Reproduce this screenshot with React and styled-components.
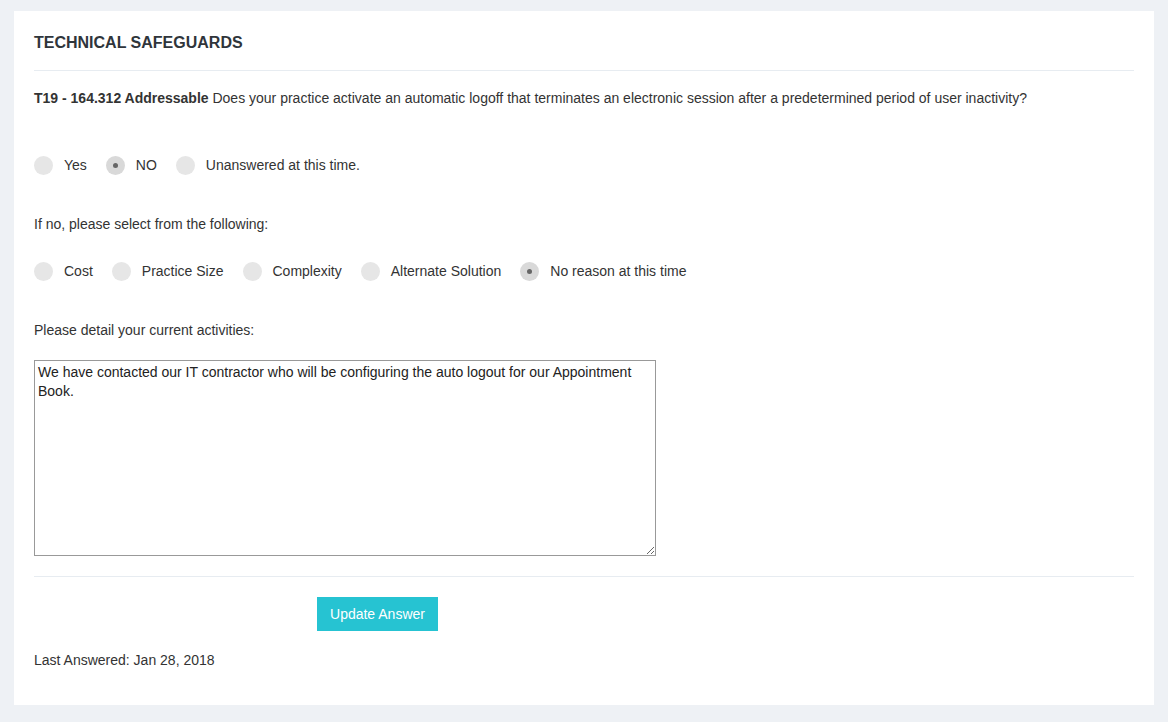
import React from "react";
import styled, { createGlobalStyle } from "styled-components";

const Global = createGlobalStyle`
  html, body { margin: 0; padding: 0; background: #eef1f5; }
  body { font-family: "Liberation Sans", Arial, sans-serif; color: #333; }
  * { box-sizing: border-box; }
`;

const Page = styled.div`
  padding: 11px 14px 17px 14px;
  min-height: 722px;
`;

const Card = styled.section`
  background: #fff;
  padding: 22px 20px 28px 20px;
  height: 694px;
`;

const Title = styled.h2`
  margin: 0;
  font-size: 16px;
  font-weight: 700;
  line-height: 20px;
  color: #2f353b;
  padding-bottom: 17px;
  border-bottom: 1px solid #e7ecf1;
`;

const Question = styled.p`
  margin: 0;
  padding-top: 18px;
  font-size: 14px;
  line-height: 18px;
  color: #333;
  b { font-weight: 700; }
`;

const RadioRow = styled.div`
  display: flex;
  align-items: center;
  gap: 0;
  margin-top: ${(p) => p.$top}px;
  height: 20px;
`;

const Option = styled.label`
  display: flex;
  align-items: center;
  margin-right: 19px;
  font-size: 14px;
  color: #333;
`;

const Circle = styled.span`
  width: 19px;
  height: 19px;
  border-radius: 50%;
  background: ${(p) => (p.$on ? "#d9d9d9" : "#e6e6e6")};
  display: inline-flex;
  align-items: center;
  justify-content: center;
  margin-right: 11px;
  &::after {
    content: "";
    width: 5px;
    height: 5px;
    border-radius: 50%;
    background: ${(p) => (p.$on ? "#666" : "transparent")};
  }
`;

const Label = styled.p`
  margin: ${(p) => p.$top}px 0 0 0;
  font-size: 14px;
  line-height: 18px;
  color: #333;
`;

const Area = styled.textarea`
  display: block;
  margin-top: 21px;
  width: 622px;
  height: 196px;
  border: 1px solid #999;
  padding: 2px 3px;
  font-family: "Liberation Sans", Arial, sans-serif;
  font-size: 14px;
  line-height: 19px;
  color: #222;
  resize: both;
  border-radius: 0;
  outline: none;
`;

const Divider = styled.hr`
  border: 0;
  border-top: 1px solid #e7ecf1;
  margin: 20px 0 0 0;
`;

const ButtonRow = styled.div`
  display: flex;
  padding-left: 283px;
  margin-top: 20px;
`;

const Button = styled.button`
  background: #26c3d2;
  color: #fff;
  border: 0;
  height: 34px;
  width: 121px;
  font-family: "Liberation Sans", Arial, sans-serif;
  font-size: 14px;
  padding: 0;
`;

const Footer = styled.p`
  margin: 20px 0 0 0;
  font-size: 14px;
  line-height: 18px;
  color: #333;
`;

const Radio = ({ on, children }) => (
  <Option>
    <Circle $on={on} />
    {children}
  </Option>
);

export default function App() {
  return (
    <>
      <Global />
      <Page>
        <Card>
          <Title>TECHNICAL SAFEGUARDS</Title>
          <Question>
            <b>T19 - 164.312 Addressable</b> Does your practice activate an automatic logoff that terminates an
            electronic session after a predetermined period of user inactivity?
          </Question>
          <RadioRow $top={48}>
            <Radio>Yes</Radio>
            <Radio on>NO</Radio>
            <Radio>Unanswered at this time.</Radio>
          </RadioRow>
          <Label $top={40}>If no, please select from the following:</Label>
          <RadioRow $top={28}>
            <Radio>Cost</Radio>
            <Radio>Practice Size</Radio>
            <Radio>Complexity</Radio>
            <Radio>Alternate Solution</Radio>
            <Radio on>No reason at this time</Radio>
          </RadioRow>
          <Label $top={40}>Please detail your current activities:</Label>
          <Area
            readOnly
            defaultValue="We have contacted our IT contractor who will be configuring the auto logout for our Appointment Book."
          />
          <Divider />
          <ButtonRow>
            <Button>Update Answer</Button>
          </ButtonRow>
          <Footer>Last Answered: Jan 28, 2018</Footer>
        </Card>
      </Page>
    </>
  );
}
